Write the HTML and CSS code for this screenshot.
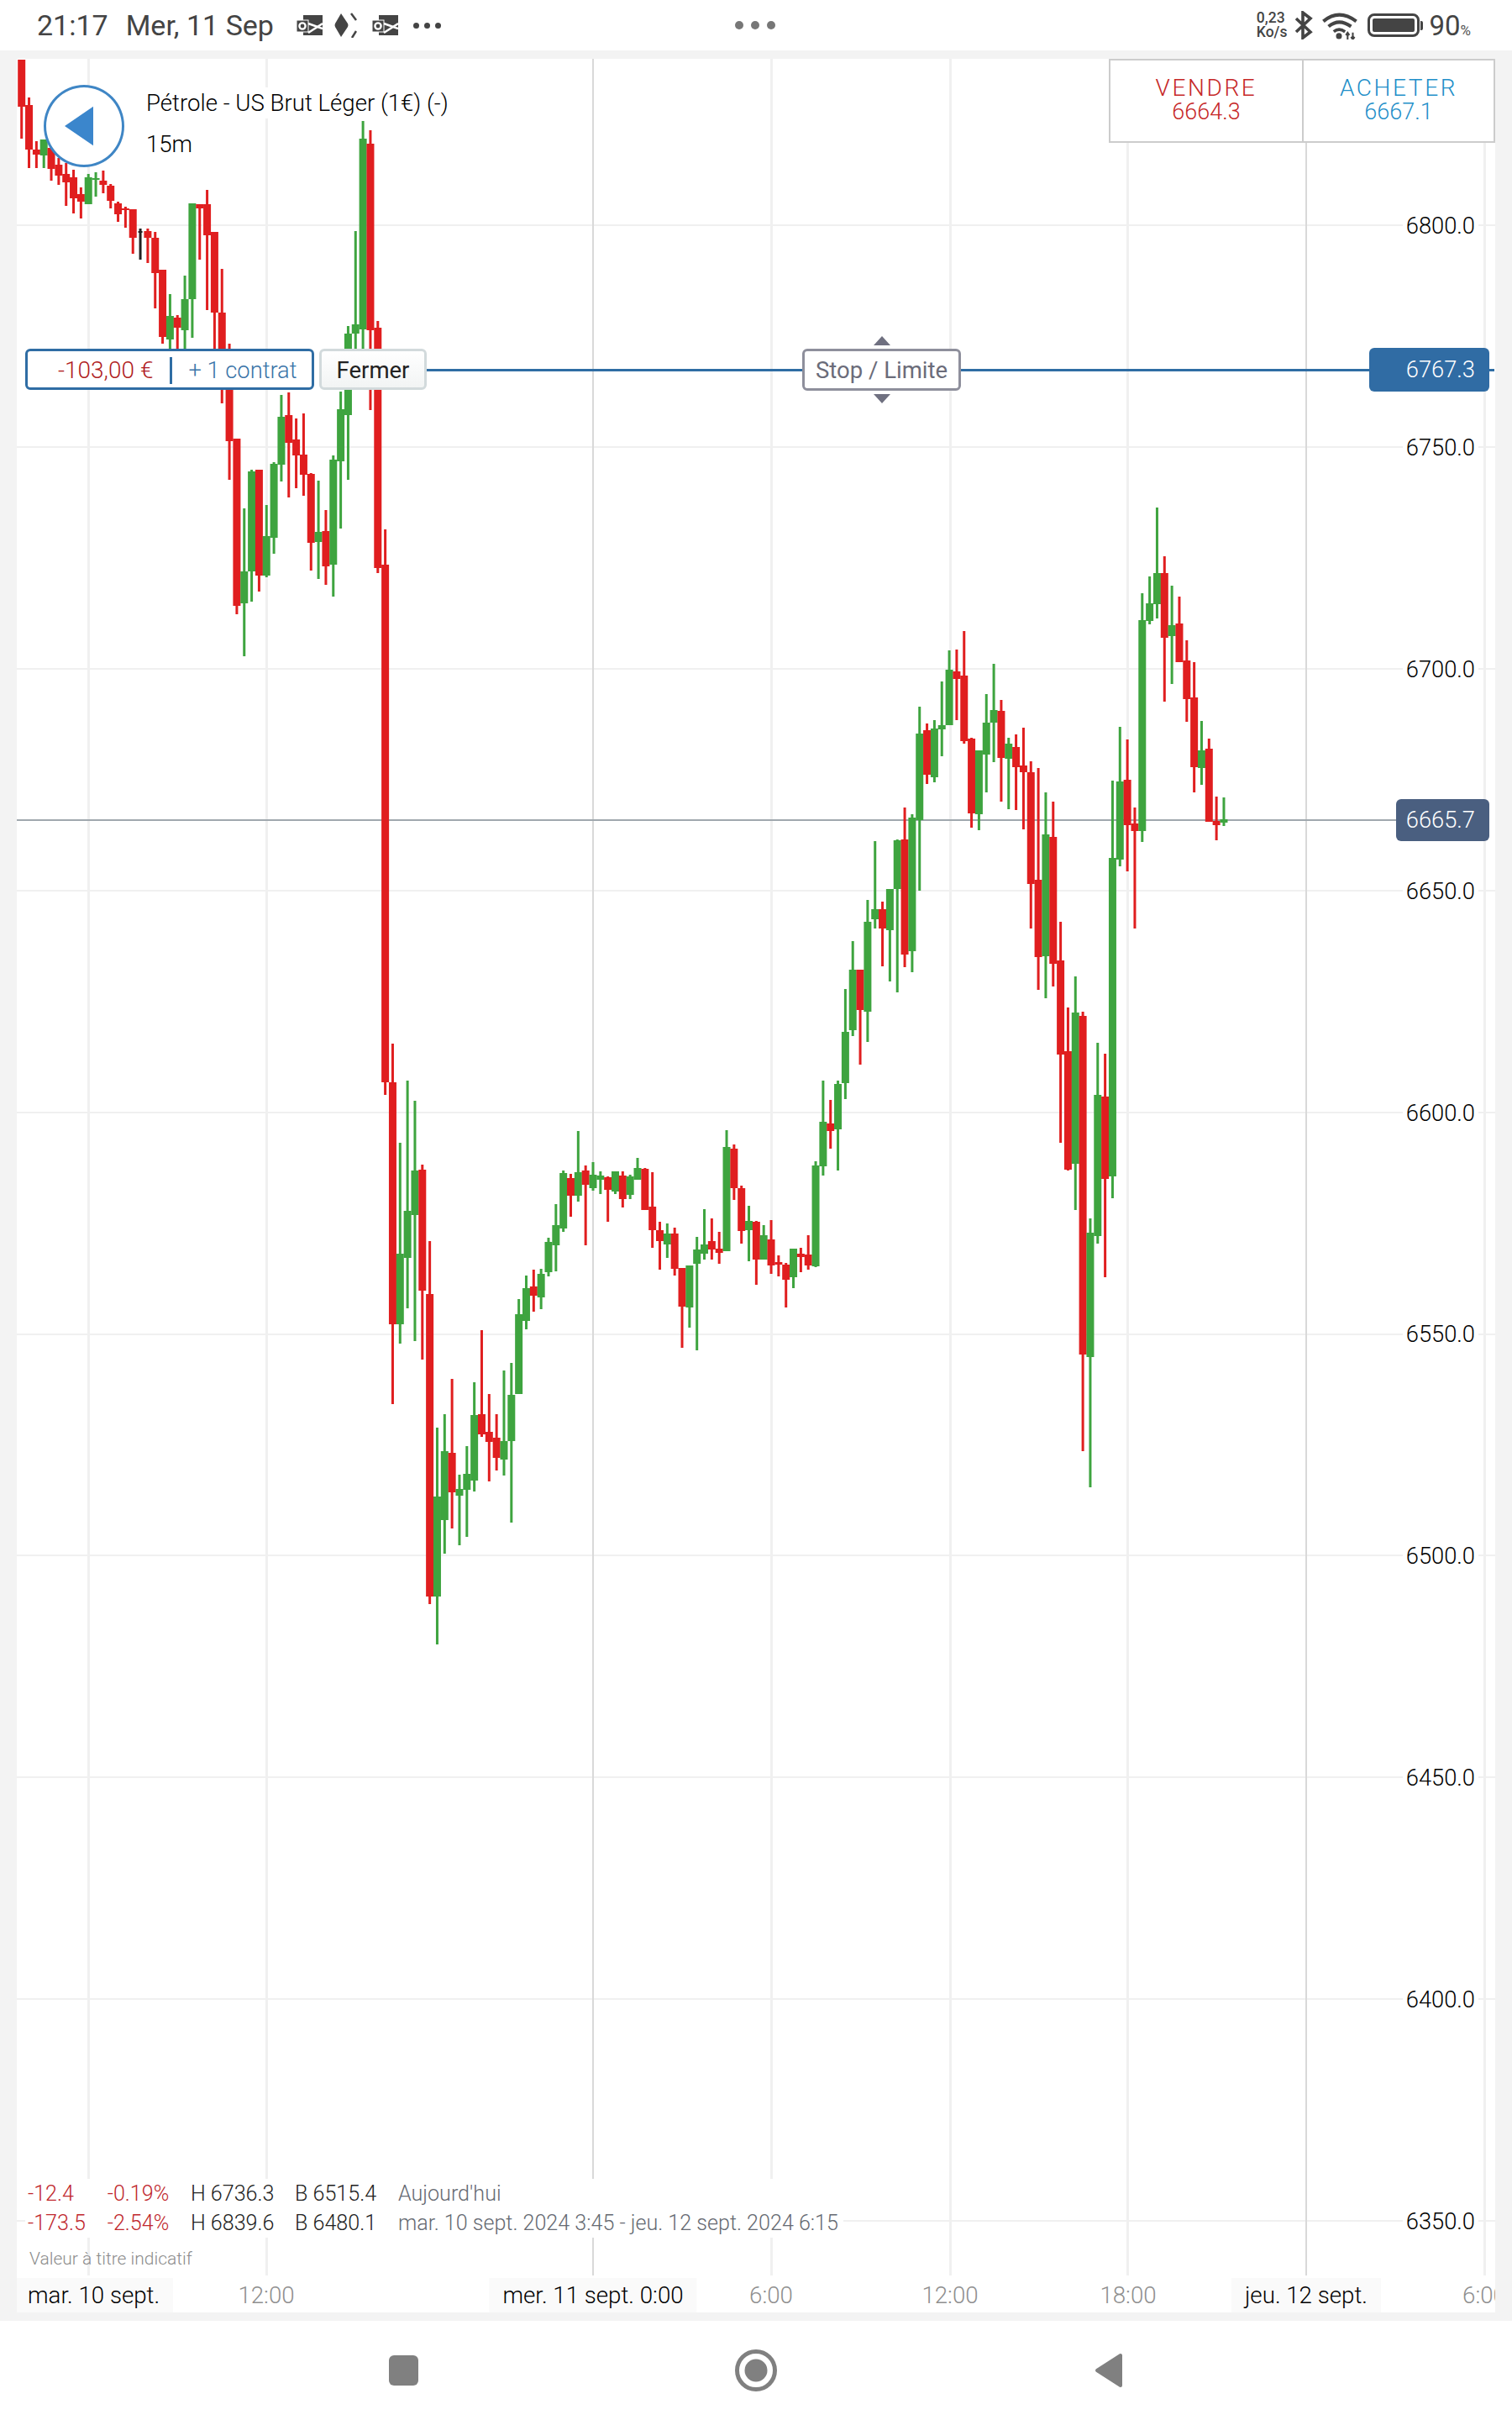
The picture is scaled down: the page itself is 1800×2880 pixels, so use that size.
FILE: index.html
```html
<!DOCTYPE html>
<html lang="fr">
<head>
    <meta charset="UTF-8">
    <meta name="viewport" content="width=device-width, initial-scale=1.0">
    <title>Pétrole - US Brut Léger</title>
    <link rel="stylesheet" href="styles.css">
</head>
<body>
    <div class="status-bar">
        <div class="status-left">
            <span class="status-time">21:17</span>
            <span class="status-date">Mer, 11 Sep</span>
            <svg class="icon-mail" viewBox="0 0 31 24">
                <rect x="8" y="0" width="23" height="24" fill="#444"/>
                <path d="M14 10 L31 16 M14 21 L31 10" stroke="#fff" stroke-width="2.5" fill="none"/>
                <rect x="0" y="6" width="14" height="14" fill="#444" stroke="#fff" stroke-width="1"/>
                <circle cx="7" cy="13" r="3.6" fill="none" stroke="#fff" stroke-width="2.4"/>
            </svg>
            <svg class="icon-diamond" viewBox="0 0 28 30">
                <path d="M9 1 L17 13 Q18 15 17 17 L9 29 L2 17 Q1 15 2 13 Z" fill="#444"/>
                <path d="M21 1 L27 9 M27 22 L22 30" stroke="#444" stroke-width="2.5" fill="none"/>
            </svg>
            <svg class="icon-mail" viewBox="0 0 31 24">
                <rect x="8" y="0" width="23" height="24" fill="#444"/>
                <path d="M14 10 L31 16 M14 21 L31 10" stroke="#fff" stroke-width="2.5" fill="none"/>
                <rect x="0" y="6" width="14" height="14" fill="#444" stroke="#fff" stroke-width="1"/>
                <circle cx="7" cy="13" r="3.6" fill="none" stroke="#fff" stroke-width="2.4"/>
            </svg>
            <div class="more-dots"><i></i><i></i><i></i></div>
        </div>
        <div class="center-dots"><i></i><i></i><i></i></div>
        <div class="status-right">
            <div class="net-speed"><span>0,23</span><span>Ko/s</span></div>
            <svg class="icon-bt" viewBox="0 0 22 34">
                <path d="M2 9 L19 25 L10 32 L10 2 L19 9 L2 25" fill="none" stroke="#444" stroke-width="3.6"/>
            </svg>
            <svg class="icon-wifi" viewBox="0 0 41 32">
                <path d="M2 11 Q20 -4 40 11" fill="none" stroke="#444" stroke-width="4"/>
                <path d="M8 17 Q20 7 34 17" fill="none" stroke="#444" stroke-width="4"/>
                <path d="M14 23 Q20 18 27 23" fill="none" stroke="#444" stroke-width="3.5"/>
                <circle cx="20" cy="28" r="3.4" fill="#444"/>
                <path d="M30 24 V32 M36 24 V32 M28 27 L30 24 L32 27 M34 29 L36 32 L38 29" fill="none" stroke="#444" stroke-width="2"/>
            </svg>
            <div class="battery"><div class="battery-fill"></div></div>
            <div class="battery-nub"></div>
            <div class="battery-text">90<small>%</small></div>
        </div>
    </div>

    <div class="main">
        <div class="chart">
            <svg id="candles" class="chart-svg" viewBox="20 70 1760 2682"></svg>

            <div class="back-btn">
                <svg viewBox="0 0 36 48"><path d="M0 24 L35 0 V48 Z" fill="#3b86cc"/></svg>
            </div>
            <div class="instrument">
                <div class="instrument-name">Pétrole - US Brut Léger (1€) (-)</div>
                <div class="instrument-period">15m</div>
            </div>

            <div class="trade-box">
                <div class="trade-side sell"><span class="trade-label">VENDRE</span><span>6664.3</span></div>
                <div class="trade-side buy"><span class="trade-label">ACHETER</span><span>6667.1</span></div>
            </div>

            <div class="position-box">
                <span class="pnl">-103,00 €</span>
                <span class="position-sep"></span>
                <span class="contracts">+ 1 contrat</span>
            </div>
            <div class="close-btn">Fermer</div>
            <div class="stop-limit">
                <span class="arrow-up"></span>
                Stop / Limite
                <span class="arrow-down"></span>
            </div>

            <div class="price-axis">
                <div class="price-row"><span>6800.0</span></div>
                <div class="price-row"><span>6750.0</span></div>
                <div class="price-row"><span>6700.0</span></div>
                <div class="price-row"><span>6650.0</span></div>
                <div class="price-row"><span>6600.0</span></div>
                <div class="price-row"><span>6550.0</span></div>
                <div class="price-row"><span>6500.0</span></div>
                <div class="price-row"><span>6450.0</span></div>
                <div class="price-row"><span>6400.0</span></div>
                <div class="price-row"><span>6350.0</span></div>
            </div>
            <div class="price-tag tag-position">6767.3</div>
            <div class="price-tag tag-current">6665.7</div>

            <div class="legend">
                <span class="red">-12.4</span><span class="red">-0.19%</span><span>H 6736.3</span><span>B 6515.4</span><span class="muted">Aujourd'hui</span>
                <span class="red">-173.5</span><span class="red">-2.54%</span><span>H 6839.6</span><span>B 6480.1</span><span class="muted">mar. 10 sept. 2024 3:45 - jeu. 12 sept. 2024 6:15</span>
            </div>
            <div class="disclaimer">Valeur à titre indicatif</div>

            <div class="time-axis">
                <span class="tick day day-first">mar. 10 sept.</span>
                <span class="tick" style="left:297px">12:00</span>
                <span class="tick day" style="left:686px">mer. 11 sept. 0:00</span>
                <span class="tick" style="left:898px">6:00</span>
                <span class="tick" style="left:1111px">12:00</span>
                <span class="tick" style="left:1323px">18:00</span>
                <span class="tick day" style="left:1535px">jeu. 12 sept.</span>
                <span class="tick" style="left:1747px">6:00</span>
            </div>
        </div>
    </div>

    <div class="nav-bar">
        <div class="nav-square"></div>
        <svg class="nav-home" viewBox="0 0 50 50">
            <circle cx="25" cy="25" r="22.5" fill="none" stroke="#808080" stroke-width="5"/>
            <circle cx="25" cy="25" r="13.5" fill="#808080"/>
        </svg>
        <svg class="nav-back" viewBox="0 0 34 42">
            <path d="M3 21 L31 3 V39 Z" fill="#808080" stroke="#808080" stroke-width="4" stroke-linejoin="round"/>
        </svg>
    </div>

    <script src="chart.js"></script>
</body>
</html>
```

FILE: styles.css
```css
* {
    margin: 0;
    padding: 0;
    box-sizing: border-box;
}

body {
    width: 1800px;
    height: 2880px;
    font-family: 'Roboto', sans-serif;
    background-color: #ffffff;
    overflow: hidden;
}

/* status bar */
.status-bar {
    height: 60px;
    padding: 0 49px 0 44px;
    display: grid;
    grid-template-columns: 1fr auto 1fr;
    align-items: center;
    color: #444444;
}

.status-left {
    display: flex;
    align-items: center;
}

.status-time,
.status-date {
    font-size: 34px;
    margin-right: 21px;
}

.status-date {
    margin-right: 27px;
}

.icon-mail {
    width: 31px;
    height: 24px;
}

.icon-diamond {
    width: 28px;
    height: 30px;
    margin: 0 18px 0 13px;
}

.more-dots {
    display: flex;
    gap: 6px;
    margin-left: 18px;
}

.more-dots i {
    width: 7px;
    height: 7px;
    border-radius: 50%;
    background-color: #444444;
}

.center-dots {
    display: flex;
    gap: 9px;
    margin-left: 3px;
}

.center-dots i {
    width: 10px;
    height: 10px;
    border-radius: 50%;
    background-color: #777777;
}

.status-right {
    display: flex;
    align-items: center;
    justify-content: flex-end;
}

.net-speed {
    display: flex;
    flex-direction: column;
    font-size: 17.5px;
    font-weight: 500;
    line-height: 17px;
    margin-right: 9px;
}

.icon-bt {
    width: 22px;
    height: 34px;
    margin-right: 10px;
}

.icon-wifi {
    width: 43px;
    height: 33px;
    margin-right: 12px;
}

.battery {
    width: 62px;
    height: 28px;
    border: 3px solid #444444;
    border-radius: 8px;
    padding: 3px;
}

.battery-fill {
    width: 50px;
    height: 100%;
    border-radius: 2px;
    background-color: #444444;
}

.battery-nub {
    width: 3px;
    height: 11px;
    margin: 0 7px 0 1px;
    border-radius: 0 2px 2px 0;
    background-color: #444444;
}

.battery-text {
    font-size: 33px;
}

.battery-text small {
    font-size: 17px;
    color: #555555;
}

/* chart area */
.main {
    height: 2702px;
    padding: 10px 20px;
    background-color: #f3f3f3;
}

.chart {
    position: relative;
    height: 2682px;
    background-color: #ffffff;
    overflow: hidden;
}

.chart-svg {
    position: absolute;
    left: 0;
    top: 0;
    width: 1760px;
    height: 2682px;
}

.back-btn {
    position: absolute;
    left: 32px;
    top: 31px;
    width: 96px;
    height: 98px;
    border: 3px solid #3f86c5;
    border-radius: 50%;
    background-color: #ffffff;
    display: flex;
    align-items: center;
    justify-content: center;
    padding-right: 11px;
}

.back-btn svg {
    width: 35px;
    height: 48px;
}

.instrument {
    position: absolute;
    left: 154px;
    top: 34px;
    font-size: 27.6px;
    font-weight: 300;
    color: #000000;
}

.instrument-name {
    height: 37px;
    line-height: 37px;
    background-color: #ffffff;
}

.instrument-period {
    margin-top: 15px;
    line-height: 32px;
}

.trade-box {
    position: absolute;
    right: 0;
    top: 0;
    width: 460px;
    height: 100px;
    display: grid;
    grid-template-columns: 230px 1fr;
    border: 2px solid #cccccc;
    background-color: #ffffff;
    font-size: 27px;
    font-weight: 300;
}

.trade-side {
    display: flex;
    flex-direction: column;
    align-items: center;
    justify-content: center;
    padding-bottom: 2px;
    line-height: 29px;
}

.trade-label {
    font-size: 28px;
    letter-spacing: 2.6px;
}

.sell {
    color: #c62828;
    border-right: 2px solid #cccccc;
}

.buy {
    color: #1f8fc9;
}

.position-box {
    position: absolute;
    left: 10px;
    top: 345px;
    width: 344px;
    height: 49px;
    display: flex;
    align-items: center;
    padding-top: 2px;
    border: 3px solid #2f6da4;
    border-radius: 6px;
    background-color: #ffffff;
    font-size: 28px;
    font-weight: 300;
}

.pnl {
    margin-left: 36px;
    color: #b01c22;
}

.position-sep {
    width: 3px;
    height: 32px;
    margin: 0 19px 0 20px;
    background-color: #2f6da4;
}

.contracts {
    font-size: 27.3px;
    color: #3a74a8;
}

.close-btn {
    position: absolute;
    left: 360px;
    top: 345px;
    width: 128px;
    height: 49px;
    display: flex;
    align-items: center;
    justify-content: center;
    padding-top: 2px;
    border: 3px solid #d2dadc;
    border-radius: 6px;
    background: linear-gradient(#ffffff, #f2f4f4);
    font-size: 27.5px;
    color: #222222;
}

.stop-limit {
    position: absolute;
    left: 935px;
    top: 345px;
    width: 189px;
    height: 50px;
    display: flex;
    align-items: center;
    justify-content: center;
    border: 3px solid #8e8f9c;
    border-radius: 6px;
    background-color: #ffffff;
    font-size: 27.5px;
    color: #6b6c7a;
}

.arrow-up,
.arrow-down {
    position: absolute;
    left: 82px;
    border-left: 10px solid transparent;
    border-right: 10px solid transparent;
}

.arrow-up {
    top: -18px;
    border-bottom: 11px solid #6f7080;
}

.arrow-down {
    bottom: -18px;
    border-top: 11px solid #6f7080;
}

.price-axis {
    position: absolute;
    right: 20px;
    top: 67px;
    display: grid;
    grid-auto-rows: 263.9px;
    justify-items: end;
    align-items: center;
    font-size: 27.3px;
    font-weight: 300;
    color: #000000;
}

.price-row span {
    display: block;
    padding: 0 4px;
    line-height: 30px;
    background-color: #ffffff;
}

.price-tag {
    position: absolute;
    display: flex;
    align-items: center;
    justify-content: flex-end;
    padding-right: 17px;
    border-radius: 6px;
    font-size: 27.3px;
    font-weight: 300;
    color: #ffffff;
}

.tag-position {
    left: 1610px;
    top: 344px;
    width: 143px;
    height: 52px;
    background-color: #306ca4;
}

.tag-current {
    left: 1642px;
    top: 881px;
    width: 111px;
    height: 50px;
    background-color: #4a5f80;
}

.legend {
    position: absolute;
    left: 10px;
    top: 2523px;
    display: grid;
    grid-template-columns: 94.7px 99.3px 124px 123px auto;
    grid-auto-rows: 35px;
    align-items: center;
    padding: 0 6px 0 3px;
    background-color: #ffffff;
    font-size: 25.1px;
    font-weight: 300;
    color: #222222;
}

.legend .red {
    color: #c0272d;
}

.legend .muted {
    color: #666a72;
}

.disclaimer {
    position: absolute;
    left: 15px;
    top: 2606px;
    font-size: 21px;
    font-weight: 300;
    color: #8c8c8c;
}

.time-axis {
    position: absolute;
    left: 0;
    right: 0;
    bottom: 0;
    height: 44px;
    background-color: #ffffff;
    overflow: hidden;
    font-size: 27.7px;
    font-weight: 300;
    color: #8f8f8f;
}

.tick {
    position: absolute;
    top: 3px;
    height: 41px;
    line-height: 41px;
    transform: translateX(-50%);
    white-space: nowrap;
}

.tick.day {
    padding: 0 16px;
    background-color: #fafafa;
    color: #000000;
}

.tick.day-first {
    left: 0;
    padding: 0 16px 0 13px;
    transform: none;
}

/* navigation bar */
.nav-bar {
    position: relative;
    height: 118px;
    display: flex;
    align-items: center;
    padding-left: 463px;
}

.nav-square {
    width: 35px;
    height: 36px;
    border-radius: 6px;
    background-color: #808080;
    margin-right: 377px;
}

.nav-home {
    width: 50px;
    height: 50px;
    margin-right: 378px;
}

.nav-back {
    width: 34px;
    height: 42px;
}
```

FILE: chart.js
```js
// Draws the grid and the 15m candles. All values are page pixels.
const SVG_NS = 'http://www.w3.org/2000/svg';
const svg = document.getElementById('candles');

const COLORS = { r: '#e01e1f', g: '#3ea43f', k: '#222222' };
const FIRST_X = 25.7;
const PITCH = 8.835;
const BODY_W = 9;
const WICK_W = 3;

// color, wick top, body top, body bottom, wick bottom
const candles = [
    ['r',71,71,127,165], ['r',116,125,178,200], ['r',168,178,184,200], ['g',166,166,185,200],
    ['r',176,176,201,215], ['r',188,196,209,220], ['r',194,207,217,245], ['r',202,211,236,254],
    ['r',223,231,240,260], ['g',207,211,243,243], ['g',205,212,214,234], ['r',203,215,220,230],
    ['r',219,221,239,248], ['r',240,242,255,264], ['r',246,248,250,271], ['r',249,249,283,302],
    ['k',272,275,276,309], ['r',272,275,283,313], ['r',276,283,325,367], ['r',321,321,401,409],
    ['g',350,376,404,430], ['r',375,378,390,430], ['g',328,356,393,430], ['g',242,242,356,402],
    ['r',243,243,248,309], ['r',226,243,280,369], ['r',276,276,372,430], ['r',320,372,433,480],
    ['r',409,433,525,571], ['r',522,522,721,731], ['g',605,680,718,781], ['g',559,561,680,716],
    ['r',559,559,685,704], ['g',601,638,685,687], ['g',550,552,640,659], ['g',470,496,553,573],
    ['r',467,494,527,592], ['r',498,523,542,581], ['r',492,541,565,590], ['r',563,564,646,679],
    ['g',572,633,645,689], ['r',607,632,674,696], ['g',542,547,672,710], ['g',466,487,549,629],
    ['g',388,397,494,571], ['g',275,386,397,415], ['g',144,165,392,415], ['r',155,171,393,488],
    ['r',382,390,676,682], ['r',630,672,1288,1303], ['r',1242,1288,1576,1671], ['g',1360,1492,1576,1599],
    ['g',1286,1441,1497,1557], ['g',1310,1393,1446,1596], ['r',1386,1392,1536,1618], ['r',1477,1540,1900,1909],
    ['g',1699,1781,1900,1957], ['g',1683,1727,1809,1849], ['r',1641,1729,1776,1819], ['g',1755,1772,1780,1839],
    ['g',1721,1754,1773,1829], ['g',1645,1684,1762,1775], ['r',1583,1683,1707,1710], ['r',1659,1704,1716,1763],
    ['r',1683,1711,1735,1750], ['g',1631,1715,1737,1756], ['g',1622,1660,1715,1812], ['g',1546,1564,1659,1659],
    ['g',1518,1533,1572,1582], ['r',1511,1531,1542,1561], ['g',1510,1516,1544,1558], ['g',1473,1478,1514,1519],
    ['g',1433,1458,1482,1513], ['g',1393,1396,1462,1466], ['r',1397,1402,1423,1448], ['g',1346,1395,1423,1430],
    ['r',1387,1393,1410,1482], ['g',1383,1398,1414,1417], ['g',1394,1399,1404,1421], ['r',1400,1401,1416,1454],
    ['g',1394,1394,1418,1421], ['r',1394,1399,1427,1437], ['g',1398,1400,1422,1427], ['g',1378,1390,1404,1404],
    ['r',1390,1391,1440,1440], ['r',1395,1436,1464,1485], ['r',1454,1464,1477,1511], ['g',1456,1468,1481,1497],
    ['r',1461,1468,1510,1518], ['r',1509,1509,1555,1604], ['g',1506,1506,1556,1580], ['g',1472,1487,1504,1607],
    ['g',1439,1481,1492,1499], ['r',1450,1477,1487,1499], ['r',1466,1486,1491,1504], ['g',1345,1365,1489,1489],
    ['r',1362,1367,1414,1428], ['r',1411,1414,1465,1480], ['g',1435,1453,1464,1501], ['r',1453,1454,1499,1529],
    ['g',1458,1470,1499,1499], ['r',1452,1475,1506,1516], ['r',1494,1502,1505,1519], ['r',1503,1505,1523,1556],
    ['g',1486,1486,1520,1533], ['r',1485,1492,1496,1514], ['r',1470,1493,1506,1511], ['g',1382,1387,1507,1508],
    ['g',1286,1335,1388,1399], ['r',1309,1337,1346,1367], ['g',1286,1290,1344,1393], ['g',1177,1228,1289,1308],
    ['g',1120,1154,1226,1233], ['r',1154,1154,1202,1267], ['g',1071,1097,1204,1240], ['g',1001,1082,1094,1105],
    ['r',1073,1082,1105,1150], ['g',1058,1058,1107,1168], ['g',999,1000,1058,1181], ['r',961,999,1136,1151],
    ['g',969,973,1132,1157], ['g',841,873,976,1060], ['r',861,869,922,933], ['g',857,867,925,931],
    ['g',811,863,868,900], ['g',774,797,863,863], ['r',773,799,808,857], ['r',751,804,882,885],
    ['r',878,879,968,985], ['g',893,893,969,988], ['g',826,860,898,943], ['g',790,845,860,907],
    ['r',833,846,902,954], ['g',878,885,903,963], ['r',874,889,913,964], ['r',866,911,919,987],
    ['r',906,919,1052,1105], ['r',914,1047,1139,1178], ['g',943,993,1138,1188], ['r',954,996,1147,1174],
    ['r',1097,1143,1255,1360], ['r',1199,1251,1392,1393], ['g',1162,1205,1385,1440], ['r',1204,1209,1612,1727],
    ['g',1450,1467,1615,1770], ['g',1241,1303,1471,1480], ['r',1254,1305,1403,1520], ['g',929,1021,1400,1426],
    ['g',865,930,1023,1031], ['r',880,928,982,1037], ['r',961,980,989,1105], ['g',706,738,989,1002],
    ['g',686,718,739,743], ['g',604,682,719,736], ['r',662,682,759,835], ['g',697,744,757,814],
    ['r',710,742,788,788], ['r',762,786,832,859], ['r',788,830,913,943], ['g',858,893,914,934],
    ['r',879,891,978,978], ['r',948,977,982,1000], ['g',949,975,979,983]
];

function addRect(x, y, w, h, fill) {
    const rect = document.createElementNS(SVG_NS, 'rect');
    rect.setAttribute('x', x);
    rect.setAttribute('y', y);
    rect.setAttribute('width', w);
    rect.setAttribute('height', h);
    rect.setAttribute('fill', fill);
    svg.appendChild(rect);
}

// horizontal grid, one line per 50 points
for (let i = 0; i < 10; i++) {
    addRect(20, Math.round(267 + i * 263.9), 1760, 2, '#f0f0f0');
}

// vertical grid, midnight lines are darker
[105, 317, 918, 1131, 1342, 1767].forEach(x => addRect(x - 1, 70, 3, 2638, '#f0f0f0'));
[706, 1555].forEach(x => addRect(x - 1, 70, 2, 2638, '#d9d9d9'));

// last price line goes under the candles
addRect(20, 975, 1642, 2, '#a0a8ae');

candles.forEach((c, i) => {
    const x = FIRST_X + i * PITCH;
    const fill = COLORS[c[0]];
    const bodyW = c[0] === 'k' ? 5 : BODY_W;
    addRect(x - WICK_W / 2, c[1], WICK_W, c[4] - c[1], fill);
    addRect(x - bodyW / 2, c[2], bodyW, Math.max(c[3] - c[2], 2), fill);
});

// open position line
addRect(508, 439, 1271, 3, '#2f6da4');
```
